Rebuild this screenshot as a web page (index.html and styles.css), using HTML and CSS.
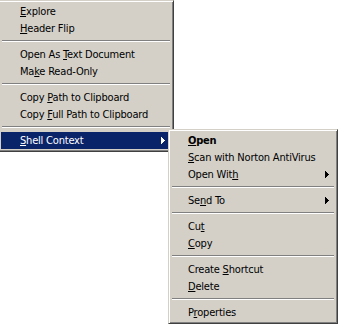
FILE: index.html
```html
<!DOCTYPE html>
<html>
<head>
<meta charset="utf-8">
<link rel="stylesheet" href="styles.css">
</head>
<body>
<div class="desk">
  <div class="menu menu--main">
    <div class="item"><span class="label"><u>E</u>xplore</span></div>
    <div class="item"><span class="label"><u>H</u>eader Flip</span></div>
    <div class="sep"></div>
    <div class="item"><span class="label">Open As <u>T</u>ext Document</span></div>
    <div class="item"><span class="label">Ma<u>k</u>e Read-Only</span></div>
    <div class="sep"></div>
    <div class="item"><span class="label">Copy <u>P</u>ath to Clipboard</span></div>
    <div class="item"><span class="label">Copy <u>F</u>ull Path to Clipboard</span></div>
    <div class="sep"></div>
    <div class="item item--active"><span class="label"><u>S</u>hell Context</span><svg class="arrow" width="4" height="7" viewBox="0 0 4 7"><path d="M0 0h1v7H0zM1 1h1v5H1zM2 2h1v3H2zM3 3h1v1H3z"/></svg></div>
  </div>
  <div class="menu menu--sub">
    <div class="item item--default"><span class="label"><u>O</u>pen</span></div>
    <div class="item"><span class="label"><u>S</u>can with Norton AntiVirus</span></div>
    <div class="item"><span class="label">Open Wit<u>h</u></span><svg class="arrow" width="4" height="7" viewBox="0 0 4 7"><path d="M0 0h1v7H0zM1 1h1v5H1zM2 2h1v3H2zM3 3h1v1H3z"/></svg></div>
    <div class="sep"></div>
    <div class="item"><span class="label">Se<u>n</u>d To</span><svg class="arrow" width="4" height="7" viewBox="0 0 4 7"><path d="M0 0h1v7H0zM1 1h1v5H1zM2 2h1v3H2zM3 3h1v1H3z"/></svg></div>
    <div class="sep"></div>
    <div class="item"><span class="label">Cu<u>t</u></span></div>
    <div class="item"><span class="label"><u>C</u>opy</span></div>
    <div class="sep"></div>
    <div class="item"><span class="label">Create <u>S</u>hortcut</span></div>
    <div class="item"><span class="label"><u>D</u>elete</span></div>
    <div class="sep"></div>
    <div class="item"><span class="label">P<u>r</u>operties</span></div>
  </div>
</div>
</body>
</html>
```
FILE: styles.css
```css
html, body {
  margin: 0;
  padding: 0;
  background: #ffffff;
}

.desk {
  position: relative;
  width: 338px;
  height: 324px;
  overflow: hidden;
  font-family: "DejaVu Sans Condensed", "DejaVu Sans", sans-serif;
  font-size: 11px;
  letter-spacing: -0.2px;
  color: #000000;
}

.menu {
  box-sizing: border-box;
  background: #d4d0c8;
  border: 1px solid;
  border-color: #d4d0c8 #404040 #404040 #d4d0c8;
  box-shadow: inset 1px 1px #ffffff, inset -1px -1px #808080;
  padding: 2px;
  display: flex;
  flex-direction: column;
}

.menu--main {
  width: 176px;
  margin-left: -2px;
}

.menu--sub {
  position: absolute;
  left: 168px;
  top: 129px;
  width: 170px;
}

.item {
  box-sizing: border-box;
  height: 17px;
  line-height: 15px;
  padding: 1px 6px 0 17px;
  display: flex;
  align-items: flex-start;
  justify-content: space-between;
  white-space: nowrap;
}

.menu--main .item {
  padding-left: 19px;
}

.item u {
  text-decoration: underline;
  text-decoration-thickness: 1px;
  text-underline-offset: 1px;
}

.item--active {
  background: #0a246a;
  color: #ffffff;
}

.item--default {
  font-weight: bold;
}

.arrow {
  display: block;
  margin-top: 4px;
  fill: currentColor;
  shape-rendering: crispEdges;
}

.sep {
  height: 9px;
  box-sizing: border-box;
  padding-top: 3px;
  margin: 0 1px;
}

.sep::before {
  content: "";
  display: block;
  height: 1px;
  background: #808080;
  border-bottom: 1px solid #ffffff;
}
```
